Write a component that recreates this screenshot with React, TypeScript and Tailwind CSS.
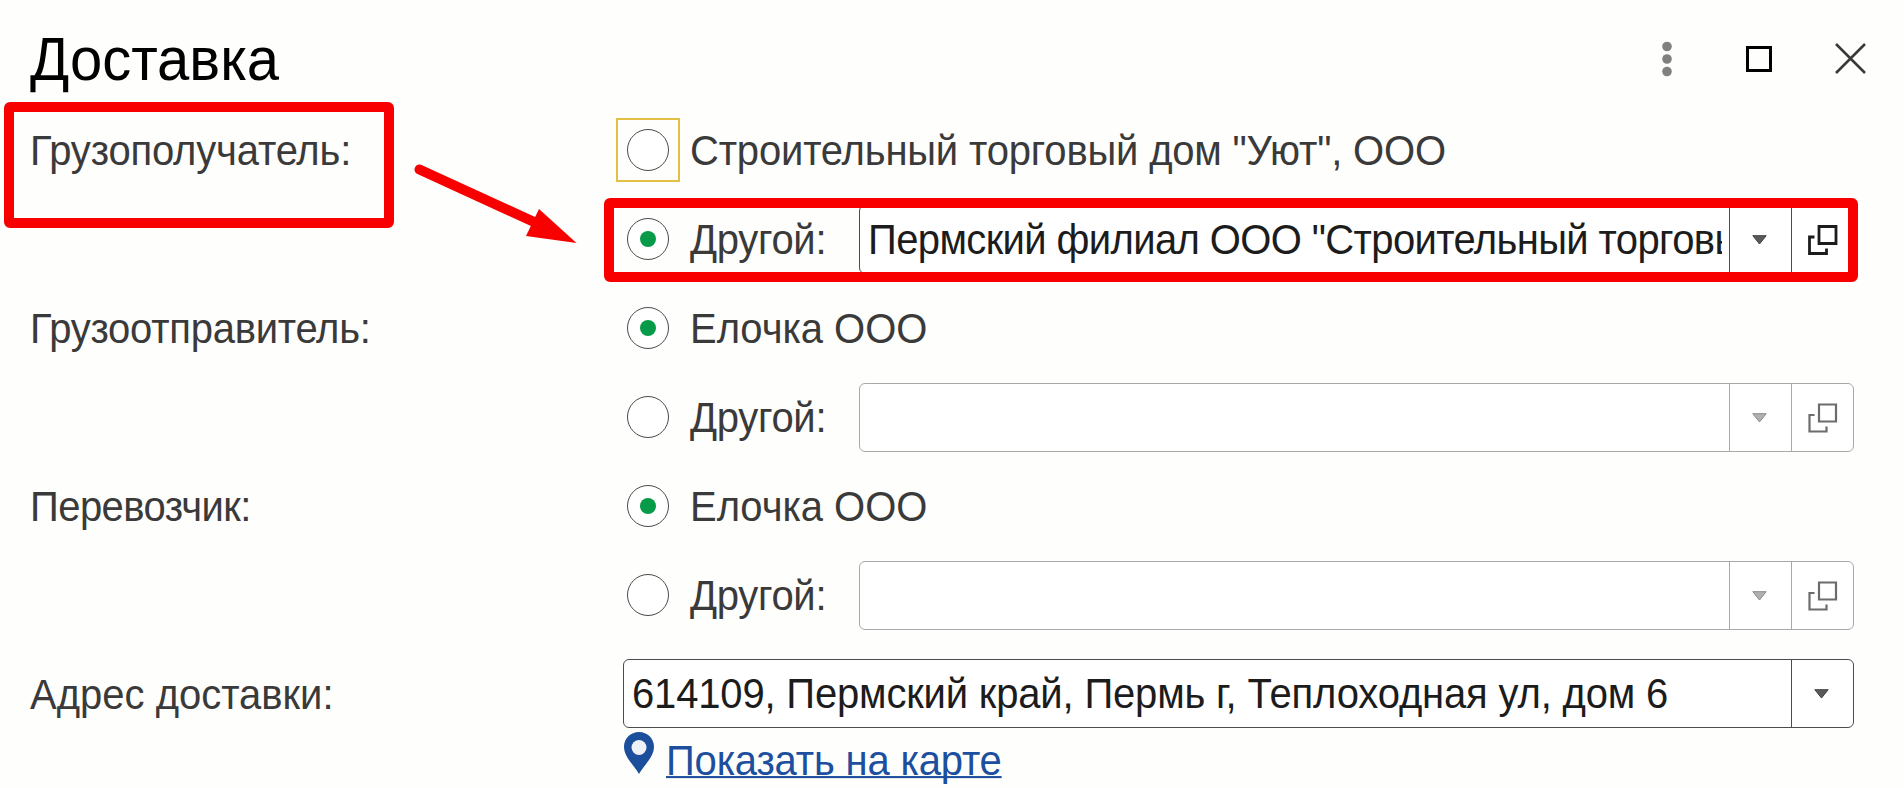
import clsx from "clsx";

function Text({ children, className }: { children?: React.ReactNode; className?: string }) {
  return (
    <span className={clsx("inline-block origin-[0_79%] translate-y-px scale-y-[1.04] whitespace-nowrap", className)}>
      {children}
    </span>
  );
}

function Radio({ checked = false }: { checked?: boolean }) {
  return (
    <span className="flex size-[42px] shrink-0 items-center justify-center rounded-full border border-[#4a4a4a] bg-white">
      {checked && <span className="size-[16px] rounded-full bg-[#079a48]" />}
    </span>
  );
}

function Arrow({ muted = false }: { muted?: boolean }) {
  return (
    <svg width="15" height="10" viewBox="0 0 15 10" className="mr-[2px]">
      <path
        d="M0.800 0.700h13.400L7.500 9z"
        fill={muted ? "#b0b0b0" : "#5a5a5a"}
        stroke={muted ? "#8a8a8a" : "#404040"}
      />
    </svg>
  );
}

function OpenIcon({ muted = false }: { muted?: boolean }) {
  return (
    <svg
      width="30"
      height="30"
      viewBox="0 0 30 30"
      fill="none"
      stroke={muted ? "#6c6c6c" : "#1c1c1c"}
      strokeWidth={muted ? 2.2 : 2.8}
      className="ml-px"
    >
      <path d="M11 1.500h17v17H11z" />
      <path d="M6.500 12H1.500v16.500h17V23.500" />
    </svg>
  );
}

function Field({
  value,
  valueClass,
  muted = false,
  open = true,
}: {
  value?: string;
  valueClass?: string;
  muted?: boolean;
  open?: boolean;
}) {
  const border = muted ? "border-[#a9a9a9]" : "border-[#4c4c50]";
  return (
    <div className={clsx("flex h-[69px] rounded-[6px] border bg-white", border, open ? "mt-[2px] w-[995px]" : "w-[1231px]")}>
      <div className="flex min-w-0 flex-1 items-center pr-[7px] pl-2">
        <div className="h-[50px] w-full overflow-hidden text-[#1c1c1c]">
          <Text className={valueClass}>{value}</Text>
        </div>
      </div>
      <div className={clsx("flex w-[62px] items-center justify-center border-l", border)}>
        <Arrow muted={muted} />
      </div>
      {open && (
        <div className={clsx("flex w-[62px] items-center justify-center border-l", border)}>
          <OpenIcon muted={muted} />
        </div>
      )}
    </div>
  );
}

function Row({
  label,
  labelClass,
  text,
  textClass,
  children,
  checked,
  focused,
}: {
  label?: string;
  labelClass?: string;
  text: string;
  textClass?: string;
  children?: React.ReactNode;
  checked?: boolean;
  focused?: boolean;
}) {
  return (
    <div className="flex h-[89px] items-center">
      <div className="w-[586px] shrink-0">
        <Text className={labelClass}>{label}</Text>
      </div>
      <div
        className={clsx(
          "mr-[10px] flex size-[64px] shrink-0 items-center justify-center border-2",
          focused ? "border-[#e3bf45]" : "border-transparent",
        )}
      >
        <Radio checked={checked} />
      </div>
      <div className={clsx(children && "w-[169px] shrink-0")}>
        <Text className={textClass}>{text}</Text>
      </div>
      {children}
    </div>
  );
}

export default function App() {
  return (
    <div className="relative h-[788px] w-[1904px] overflow-hidden bg-[#fefefd] pl-[30px] font-['Liberation_Sans',Arial,sans-serif] text-[40px] leading-[48px] text-[#3a3a3a]">
      <header className="flex h-[105px] items-start justify-between pr-[38px]">
        <h1 className="mt-[24px] text-[58px] leading-[70px] text-black">
          <Text>Доставка</Text>
        </h1>
        <div className="mt-[41px] flex items-center">
          <svg width="10" height="36" viewBox="0 0 10 36" fill="#808080" className="mr-[74px]">
            <circle cx="5" cy="5.500" r="4.800" />
            <circle cx="5" cy="18" r="4.800" />
            <circle cx="5" cy="30.500" r="4.800" />
          </svg>
          <div className="mr-[63px] size-[26px] border-3 border-black" />
          <svg width="31" height="31" viewBox="0 0 31 31" stroke="#3a3a3a" strokeWidth="2.600" className="mb-[2px]">
            <path d="M1 1l29 29M30 1L1 30" />
          </svg>
        </div>
      </header>

      <Row
        label="Грузополучатель:"
        labelClass="tracking-[-0.18px]"
        text={'Строительный торговый дом "Уют", ООО'}
        textClass="tracking-[-0.18px]"
        focused
      />
      <Row text="Другой:" textClass="tracking-[-0.3px]" checked>
        <Field value={'Пермский филиал ООО "Строительный торговый дом "Уют"'} valueClass="tracking-[-0.62px]" />
      </Row>
      <Row label="Грузоотправитель:" labelClass="tracking-[-0.25px]" text="Елочка ООО" textClass="tracking-[-0.05px]" checked />
      <Row text="Другой:" textClass="tracking-[-0.3px]">
        <Field muted />
      </Row>
      <Row label="Перевозчик:" labelClass="tracking-[-0.55px]" text="Елочка ООО" textClass="tracking-[-0.05px]" checked />
      <Row text="Другой:" textClass="tracking-[-0.3px]">
        <Field muted />
      </Row>

      <div className="mt-5 flex items-center">
        <div className="w-[593px] shrink-0">
          <Text>Адрес доставки:</Text>
        </div>
        <Field
          value="614109, Пермский край, Пермь г, Теплоходная ул, дом 6"
          valueClass="tracking-[-0.17px]"
          open={false}
        />
      </div>
      <div className="mt-[4px] ml-[594px] flex">
        <svg width="30" height="42" viewBox="0 0 30 42" className="mr-[12px]">
          <path d="M15 0C6.500 0 0 6.500 0 14.700C0 25 10 33 15 42C20 33 30 25 30 14.700C30 6.500 23.500 0 15 0z" fill="#1b4f9c" />
          <circle cx="15" cy="15.500" r="7.500" fill="#eef1f5" />
        </svg>
        <a href="#" className="mt-[4px] text-[#1d4f9f]">
          <Text className="tracking-[-0.18px] underline decoration-2 underline-offset-1 [text-decoration-skip-ink:none]">
            Показать на карте
          </Text>
        </a>
      </div>

      {/* Highlights */}
      <div className="absolute top-[102px] left-[4px] h-[126px] w-[390px] rounded-[6px] border-[10px] border-[#f80000]" />
      <div className="absolute top-[198px] left-[604px] h-[84px] w-[1254px] rounded-[6px] border-[10px] border-[#f80000]" />
      <svg className="absolute top-[150px] left-[400px]" width="190" height="100" viewBox="400 150 190 100">
        <path d="M419.500 169.500L533 221.500" stroke="#f80000" strokeWidth="10" strokeLinecap="round" />
        <path d="M576.500 243L539 209L526 236z" fill="#f80000" />
      </svg>
    </div>
  );
}
